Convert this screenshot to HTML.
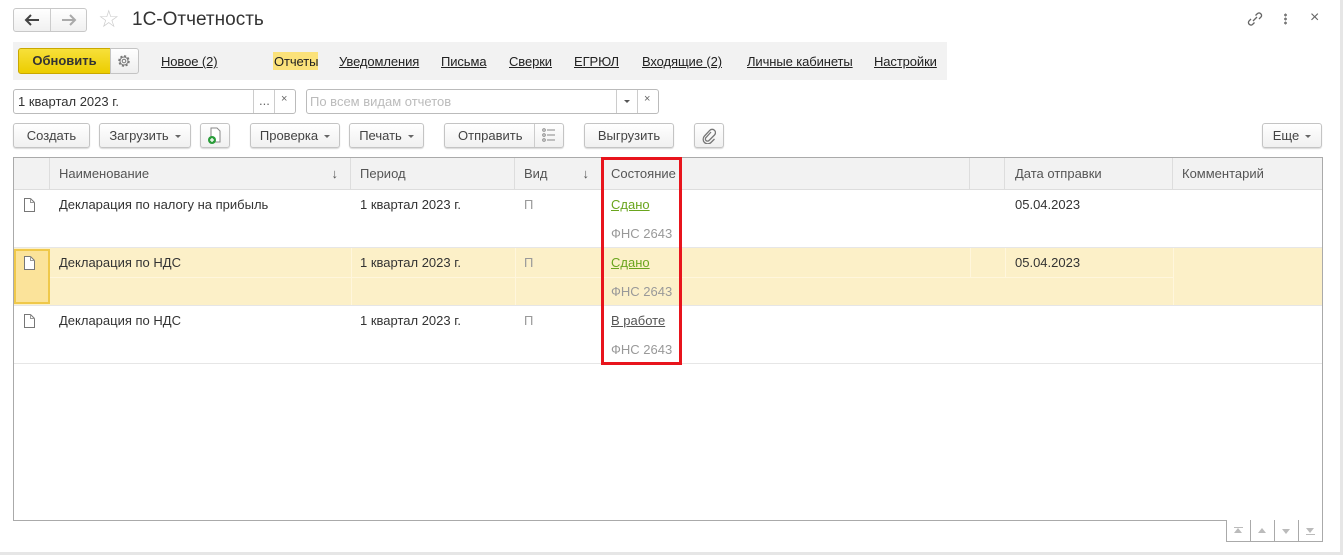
<!DOCTYPE html>
<html><head><meta charset="utf-8"><style>
*{box-sizing:border-box;margin:0;padding:0}
body{width:1343px;height:555px;background:#fff;font-family:"Liberation Sans",Arial,sans-serif;font-size:13px;color:#333;position:relative;overflow:hidden}
.a{position:absolute}
.btn{position:absolute;height:25px;border:1px solid #c4c4c4;border-radius:3px;background:linear-gradient(#fff,#f0f0f0);box-shadow:0 1px 1px rgba(0,0,0,.15);line-height:23px;text-align:center;color:#444;font-size:13px}
.dd::after{content:"";display:inline-block;margin-left:6px;border-left:3px solid transparent;border-right:3px solid transparent;border-top:3px solid #666;vertical-align:middle}
.lnk{position:absolute;top:54px;color:#222;text-decoration:underline;font-size:13px;letter-spacing:-0.1px}
.hd{position:absolute;top:158px;height:32px;line-height:31px;color:#555;background:#f2f2f2;border-right:1px solid #ddd;padding-left:9px}
.c{position:absolute;font-size:13px;color:#333}
.doc{position:absolute}
</style></head><body>
<div class="a" style="left:1340px;top:0;width:3px;height:555px;background:#e6e6e6"></div>
<div class="a" style="left:0;top:552px;width:1343px;height:3px;background:#e6e6e6"></div>
<!-- nav -->
<div class="a" style="left:13px;top:8px;width:74px;height:24px;border:1px solid #c8c8c8;border-radius:3px;background:linear-gradient(#fff,#f0f0f0)"></div>
<div class="a" style="left:50px;top:9px;width:1px;height:22px;background:#ccc"></div>
<svg class="a" style="left:24px;top:14px" width="16" height="12"><path d="M2 6h13M7 1L2 6l5 5" stroke="#444" stroke-width="2" fill="none"/></svg>
<svg class="a" style="left:61px;top:14px" width="16" height="12"><path d="M1 6h13M9 1l5 5-5 5" stroke="#aaa" stroke-width="2" fill="none"/></svg>
<div class="a" style="left:98px;top:5px;font-size:24px;color:#ccc">☆</div>
<div class="a" style="left:132px;top:9px;font-size:19px;color:#333">1С-Отчетность</div>
<svg class="a" style="left:1246px;top:11px" width="18" height="16"><path d="M7 10 L11 6 M5 8 l-2 2 a2.5 2.5 0 0 0 3.5 3.5 l2-2 M13 8 l2-2 a2.5 2.5 0 0 0-3.5-3.5 l-2 2" stroke="#666" stroke-width="1.3" fill="none"/></svg>
<div class="a" style="left:1284px;top:13px;width:3px;height:12px;background:radial-gradient(circle,#777 1.3px,transparent 1.5px) 0 0/3px 4px"></div>
<div class="a" style="left:1310px;top:9px;font-size:16px;color:#666">×</div>
<!-- command bar -->
<div class="a" style="left:13px;top:42px;width:934px;height:38px;background:#f2f2f2"></div>
<div class="a" style="left:18px;top:48px;width:93px;height:26px;border:1px solid #c9a800;border-radius:3px 0 0 3px;background:linear-gradient(#f7e03a,#eccd00);font-weight:bold;line-height:24px;text-align:center;color:#333">Обновить</div>
<div class="a" style="left:110px;top:48px;width:29px;height:26px;border:1px solid #c4c4c4;border-radius:0 3px 3px 0;background:linear-gradient(#fff,#eee)"></div>
<svg class="a" style="left:116px;top:53px" width="16" height="16"><circle cx="8" cy="8" r="5" fill="none" stroke="#777" stroke-width="1.5" stroke-dasharray="2.2 1.7"/><circle cx="8" cy="8" r="4" fill="none" stroke="#777"/><circle cx="8" cy="8" r="1.8" fill="none" stroke="#777"/></svg>
<div class="lnk" style="left:161px">Новое (2)</div>
<div class="a" style="left:273px;top:52px;width:45px;height:18px;background:#fbe27a"></div>
<div class="a" style="left:274px;top:54px;color:#222;letter-spacing:-0.1px">Отчеты</div>
<div class="lnk" style="left:339px">Уведомления</div>
<div class="lnk" style="left:441px">Письма</div>
<div class="lnk" style="left:509px">Сверки</div>
<div class="lnk" style="left:574px">ЕГРЮЛ</div>
<div class="lnk" style="left:642px">Входящие (2)</div>
<div class="lnk" style="left:747px">Личные кабинеты</div>
<div class="lnk" style="left:874px">Настройки</div>
<!-- inputs -->
<div class="a" style="left:13px;top:89px;width:283px;height:25px;border:1px solid #bbb;border-radius:3px"></div>
<div class="a" style="left:18px;top:94px;color:#333">1 квартал 2023 г.</div>
<div class="a" style="left:253px;top:90px;width:1px;height:23px;background:#ccc"></div>
<div class="a" style="left:274px;top:90px;width:1px;height:23px;background:#ccc"></div>
<div class="a" style="left:259px;top:93px;color:#666">...</div>
<div class="a" style="left:281px;top:93px;color:#666;font-size:11px">×</div>
<div class="a" style="left:306px;top:89px;width:353px;height:25px;border:1px solid #bbb;border-radius:3px"></div>
<div class="a" style="left:310px;top:94px;color:#bbb">По всем видам отчетов</div>
<div class="a" style="left:616px;top:90px;width:1px;height:23px;background:#ccc"></div>
<div class="a" style="left:637px;top:90px;width:1px;height:23px;background:#ccc"></div>
<div class="a" style="left:624px;top:100px;border-left:3px solid transparent;border-right:3px solid transparent;border-top:3px solid #555"></div>
<div class="a" style="left:644px;top:93px;color:#666;font-size:11px">×</div>
<!-- toolbar -->
<div class="btn" style="left:13px;top:123px;width:77px">Создать</div>
<div class="btn dd" style="left:99px;top:123px;width:92px">Загрузить</div>
<div class="btn" style="left:200px;top:123px;width:30px"><svg width="16" height="18" style="margin-top:3px"><path d="M4 1h6l3 3v11H4z" fill="#fff" stroke="#888"/><circle cx="5" cy="13" r="4" fill="#2a9d3a"/><path d="M5 11v4M3 13h4" stroke="#fff" stroke-width="1.3"/></svg></div>
<div class="btn dd" style="left:250px;top:123px;width:90px">Проверка</div>
<div class="btn dd" style="left:349px;top:123px;width:75px">Печать</div>
<div class="btn" style="left:444px;top:123px;width:120px;text-align:left;padding-left:13px">Отправить</div>
<div class="a" style="left:534px;top:124px;width:1px;height:23px;background:#ccc"></div>
<svg class="a" style="left:542px;top:128px" width="14" height="14"><g fill="none" stroke="#888"><circle cx="2" cy="2" r="1.3"/><circle cx="2" cy="7" r="1.3"/><circle cx="2" cy="12" r="1.3"/><path d="M5 2h8M5 7h8M5 12h8"/></g></svg>
<div class="btn" style="left:584px;top:123px;width:90px">Выгрузить</div>
<div class="btn" style="left:694px;top:123px;width:30px"><svg width="14" height="16" style="margin-top:4px"><path d="M9 4L4 9.5a2 2 0 0 0 3 3L12.5 7a3.3 3.3 0 0 0-4.7-4.7L2.5 8a4.5 4.5 0 0 0 6.5 6.5l3.5-3.5" stroke="#777" stroke-width="1.3" fill="none"/></svg></div>
<div class="btn dd" style="left:1262px;top:123px;width:60px">Еще</div>
<!-- table -->
<div class="a" style="left:13px;top:157px;width:1310px;height:364px;border:1px solid #aaa"></div>
<div class="hd" style="left:14px;width:36px"></div>
<div class="hd" style="left:50px;width:301px">Наименование<span style="position:absolute;right:12px">↓</span></div>
<div class="hd" style="left:351px;width:164px">Период</div>
<div class="hd" style="left:515px;width:87px">Вид<span style="position:absolute;right:12px">↓</span></div>
<div class="hd" style="left:602px;width:368px">Состояние</div>
<div class="hd" style="left:970px;width:35px"></div>
<div class="hd" style="left:1005px;width:168px;padding-left:10px">Дата отправки</div>
<div class="hd" style="left:1173px;width:149px;border-right:none">Комментарий</div>
<div class="a" style="left:14px;top:189px;width:1308px;height:1px;background:#ddd"></div>
<!-- row2 bg -->
<div class="a" style="left:14px;top:248px;width:1308px;height:58px;background:#fcf0c8"></div>
<div class="a" style="left:14px;top:249px;width:36px;height:55px;background:#fbe39a;border:2px solid #efc84a"></div>
<div class="a" style="left:50px;top:277px;width:1123px;height:1px;background:#fff6dc"></div>
<div class="a" style="left:351px;top:248px;width:1px;height:58px;background:#fff6dc"></div>
<div class="a" style="left:515px;top:248px;width:1px;height:58px;background:#fff6dc"></div>
<div class="a" style="left:970px;top:248px;width:1px;height:29px;background:#fff6dc"></div>
<div class="a" style="left:1005px;top:248px;width:1px;height:29px;background:#fff6dc"></div>
<div class="a" style="left:1173px;top:248px;width:1px;height:58px;background:#fff6dc"></div>
<div class="a" style="left:14px;top:247px;width:1308px;height:1px;background:#e6e6e6"></div>
<div class="a" style="left:14px;top:305px;width:1308px;height:1px;background:#e6e6e6"></div>
<div class="a" style="left:14px;top:363px;width:1308px;height:1px;background:#e6e6e6"></div>
<!-- rows -->
<svg class="doc" style="left:23px;top:197px" width="13" height="16"><path d="M1.5 1.5h6l4 4v9h-10z" fill="#fff" stroke="#777"/><path d="M7.5 1.5v4h4" fill="none" stroke="#999"/></svg>
<svg class="doc" style="left:23px;top:255px" width="13" height="16"><path d="M1.5 1.5h6l4 4v9h-10z" fill="#fff" stroke="#777"/><path d="M7.5 1.5v4h4" fill="none" stroke="#999"/></svg>
<svg class="doc" style="left:23px;top:313px" width="13" height="16"><path d="M1.5 1.5h6l4 4v9h-10z" fill="#fff" stroke="#777"/><path d="M7.5 1.5v4h4" fill="none" stroke="#999"/></svg>
<div class="c" style="left:59px;top:197px">Декларация по налогу на прибыль</div>
<div class="c" style="left:59px;top:255px">Декларация по НДС</div>
<div class="c" style="left:59px;top:313px">Декларация по НДС</div>
<div class="c" style="left:360px;top:197px">1 квартал 2023 г.</div>
<div class="c" style="left:360px;top:255px">1 квартал 2023 г.</div>
<div class="c" style="left:360px;top:313px">1 квартал 2023 г.</div>
<div class="c" style="left:524px;top:197px;color:#999">П</div>
<div class="c" style="left:524px;top:255px;color:#999">П</div>
<div class="c" style="left:524px;top:313px;color:#999">П</div>
<div class="c" style="left:611px;top:197px;color:#6aa51e;text-decoration:underline">Сдано</div>
<div class="c" style="left:611px;top:226px;color:#999">ФНС 2643</div>
<div class="c" style="left:611px;top:255px;color:#6aa51e;text-decoration:underline">Сдано</div>
<div class="c" style="left:611px;top:284px;color:#999">ФНС 2643</div>
<div class="c" style="left:611px;top:313px;color:#555;text-decoration:underline">В работе</div>
<div class="c" style="left:611px;top:342px;color:#999">ФНС 2643</div>
<div class="c" style="left:1015px;top:197px">05.04.2023</div>
<div class="c" style="left:1015px;top:255px">05.04.2023</div>
<div class="a" style="left:601px;top:157px;width:81px;height:208px;border:3px solid #e8141c"></div>
<!-- scroll buttons -->
<div class="a" style="left:1226px;top:520px;width:97px;height:22px;border:1px solid #aaa;border-top:none;background:#fff"></div>
<div class="a" style="left:1250px;top:520px;width:1px;height:21px;background:#aaa"></div>
<div class="a" style="left:1274px;top:520px;width:1px;height:21px;background:#aaa"></div>
<div class="a" style="left:1298px;top:520px;width:1px;height:21px;background:#aaa"></div>
<div class="a" style="left:1234px;top:527px;width:9px;height:1px;background:#bbb"></div>
<div class="a" style="left:1234px;top:528px;border-left:4.5px solid transparent;border-right:4.5px solid transparent;border-bottom:5px solid #bbb"></div>
<div class="a" style="left:1258px;top:528px;border-left:4.5px solid transparent;border-right:4.5px solid transparent;border-bottom:5px solid #bbb"></div>
<div class="a" style="left:1282px;top:529px;border-left:4.5px solid transparent;border-right:4.5px solid transparent;border-top:5px solid #bbb"></div>
<div class="a" style="left:1306px;top:528px;border-left:4.5px solid transparent;border-right:4.5px solid transparent;border-top:5px solid #bbb"></div>
<div class="a" style="left:1306px;top:534px;width:9px;height:1px;background:#bbb"></div>
</body></html>
